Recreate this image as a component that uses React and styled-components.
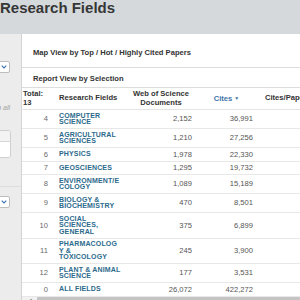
import React from 'react';
import styled, { createGlobalStyle } from 'styled-components';

const GlobalStyle = createGlobalStyle`
  html, body {
    margin: 0;
    padding: 0;
    background: #ffffff;
    overflow: hidden;
  }
  body {
    font-family: "Liberation Sans", Arial, sans-serif;
  }
`;

const Page = styled.div`
  width: 300px;
  height: 300px;
  overflow: hidden;
  display: flex;
  flex-direction: column;
`;

const Header = styled.header`
  height: 34px;
  flex-shrink: 0;
  background: #d5d9dc;
`;

const Title = styled.h1`
  margin: 0;
  font-size: 15px;
  line-height: 15px;
  font-weight: bold;
  color: #363636;
`;

const Body = styled.div`
  flex: 1;
  display: flex;
  min-height: 0;
`;

const Sidebar = styled.aside`
  width: 21px;
  flex-shrink: 0;
  background: #ececec;
  border-right: 1px solid #d4d4d4;
  overflow: hidden;
  display: flex;
  justify-content: flex-end;
`;

const SidePanel = styled.div`
  width: 160px;
  flex-shrink: 0;
  padding-right: 11px;
  display: flex;
  flex-direction: column;
`;

const Select = styled.div`
  margin-top: ${(p) => p.$top}px;
  height: 10px;
  background: #ffffff;
  border: 1px solid #bdbdbd;
  border-radius: 2px;
  display: flex;
  justify-content: flex-end;
  align-items: center;
  padding-right: 2px;
`;

const Hint = styled.div`
  margin-top: 30px;
  font-size: 7px;
  line-height: 9px;
  font-style: italic;
  color: #a2a2a2;
  text-align: right;
`;

const Box = styled.div`
  margin-top: 18px;
  margin-right: -1px;
  border: 1px solid #cfcfcf;
  border-radius: 3px;
  overflow: hidden;
`;

const BoxHead = styled.div`
  height: 10px;
  background: #f3f3f3;
  border-bottom: 1px solid #d6d6d6;
`;

const BoxBody = styled.div`
  height: 15px;
  background: #ffffff;
`;

const SideRule = styled.div`
  margin-top: 28px;
  margin-right: -11px;
  border-top: 1px solid #dedede;
`;

const Main = styled.main`
  flex: 1;
  min-width: 0;
  background: #ffffff;
  overflow: hidden;
  display: flex;
  flex-direction: column;
`;

const ViewBar = styled.div`
  height: ${(p) => p.$height}px;
  flex-shrink: 0;
  padding: ${(p) => p.$pad}px 0 0 11px;
  box-sizing: border-box;
  display: flex;
  align-items: center;
  font-size: 7.6px;
  font-weight: bold;
  color: #333333;
  border-bottom: ${(p) => (p.$rule ? '1px solid #dddddd' : 'none')};
`;

const Table = styled.table`
  border-collapse: collapse;
  table-layout: fixed;
  width: 310px;
  flex-shrink: 0;
  font-size: 7.6px;
`;

const Th = styled.th`
  padding: 2px 4px;
  padding-left: ${(p) => (p.$left ? p.$left : 4)}px;
  font-weight: bold;
  line-height: 8.5px;
  color: ${(p) => (p.$active ? '#3f74ab' : '#333333')};
  text-align: ${(p) => p.$align || 'center'};
  vertical-align: middle;
  border-top: 1px solid #dddddd;
  border-bottom: 1px solid #e4e4e4;
  white-space: nowrap;
  overflow: hidden;
`;

const Td = styled.td`
  padding: 2.5px 4px;
  padding-right: ${(p) => (p.$right ? p.$right : 4)}px;
  line-height: 7.5px;
  color: ${(p) => p.$color || '#555555'};
  text-align: ${(p) => p.$align || 'right'};
  vertical-align: middle;
  border-bottom: 1px solid #e8e8e8;
  white-space: nowrap;
`;

const FieldName = styled.span`
  display: block;
  font-size: 7px;
  line-height: 6.5px;
  font-weight: bold;
  letter-spacing: 0.15px;
  color: #2c6a8c;
`;

const SortMark = styled.span`
  font-size: 5px;
  margin-left: 2px;
  vertical-align: 1px;
`;

const Scrollbar = styled.div`
  height: 6px;
  flex-shrink: 0;
  display: flex;
  align-items: center;
  background: #f1f1f1;
`;

const ScrollArrow = styled.span`
  width: 15px;
  font-size: 5px;
  color: #888888;
  text-align: center;
`;

const ScrollThumb = styled.div`
  flex: 1;
  height: 6px;
  background: #c4c4c4;
  border-radius: 1px;
`;

const rows = [
  [4, ['COMPUTER', 'SCIENCE'], '2,152', '36,991', '17.19'],
  [5, ['AGRICULTURAL', 'SCIENCES'], '1,210', '27,256', '22.53'],
  [6, ['PHYSICS'], '1,978', '22,330', '11.29'],
  [7, ['GEOSCIENCES'], '1,295', '19,732', '15.24'],
  [8, ['ENVIRONMENT/E', 'COLOGY'], '1,089', '15,189', '13.95'],
  [9, ['BIOLOGY &', 'BIOCHEMISTRY'], '470', '8,501', '18.09'],
  [10, ['SOCIAL', 'SCIENCES,', 'GENERAL'], '375', '6,899', '18.40'],
  [11, ['PHARMACOLOG', 'Y &', 'TOXICOLOGY'], '245', '3,900', '15.92'],
  [12, ['PLANT & ANIMAL', 'SCIENCE'], '177', '3,531', '19.95'],
  [0, ['ALL FIELDS'], '26,072', '422,272', '16.20'],
];

function Chevron() {
  return (
    <svg width="6" height="4" viewBox="0 0 6 4">
      <polyline points="0.7,0.7 3,3 5.3,0.7" fill="none" stroke="#3f74ab" strokeWidth="1.1" />
    </svg>
  );
}

function App() {
  return (
    <Page>
      <GlobalStyle />
      <Header>
        <Title>Research Fields</Title>
      </Header>
      <Body>
        <Sidebar>
          <SidePanel>
            <Select $top={27}>
              <Chevron />
            </Select>
            <Hint>Search in all</Hint>
            <Box>
              <BoxHead />
              <BoxBody />
            </Box>
            <SideRule />
            <Select $top={9}>
              <Chevron />
            </Select>
          </SidePanel>
        </Sidebar>
        <Main>
          <ViewBar $height={34} $pad={3} $rule>Map View by Top / Hot / Highly Cited Papers</ViewBar>
          <ViewBar $height={19} $pad={1}>Report View by Selection</ViewBar>
          <Table>
            <colgroup>
              <col style={{ width: 33 }} />
              <col style={{ width: 71 }} />
              <col style={{ width: 70 }} />
              <col style={{ width: 61 }} />
              <col style={{ width: 75 }} />
            </colgroup>
            <thead>
              <tr>
                <Th $align="left" $left={1}>
                  Total:
                  <br />
                  13
                </Th>
                <Th $align="left">Research Fields</Th>
                <Th>
                  Web of Science
                  <br />
                  Documents
                </Th>
                <Th $active>
                  Cites<SortMark>▼</SortMark>
                </Th>
                <Th $align="left" $left={8}>Cites/Paper</Th>
              </tr>
            </thead>
            <tbody>
              {rows.map(([rank, name, docs, cites, ratio]) => (
                <tr key={rank}>
                  <Td $color="#6a6a6a" $right={7}>{rank}</Td>
                  <Td $align="left">
                    {name.map((line) => (
                      <FieldName key={line}>{line}</FieldName>
                    ))}
                  </Td>
                  <Td>{docs}</Td>
                  <Td>{cites}</Td>
                  <Td $right={8}>{ratio}</Td>
                </tr>
              ))}
            </tbody>
          </Table>
          <Scrollbar>
            <ScrollArrow>◀</ScrollArrow>
            <ScrollThumb />
          </Scrollbar>
        </Main>
      </Body>
    </Page>
  );
}

export default App;
